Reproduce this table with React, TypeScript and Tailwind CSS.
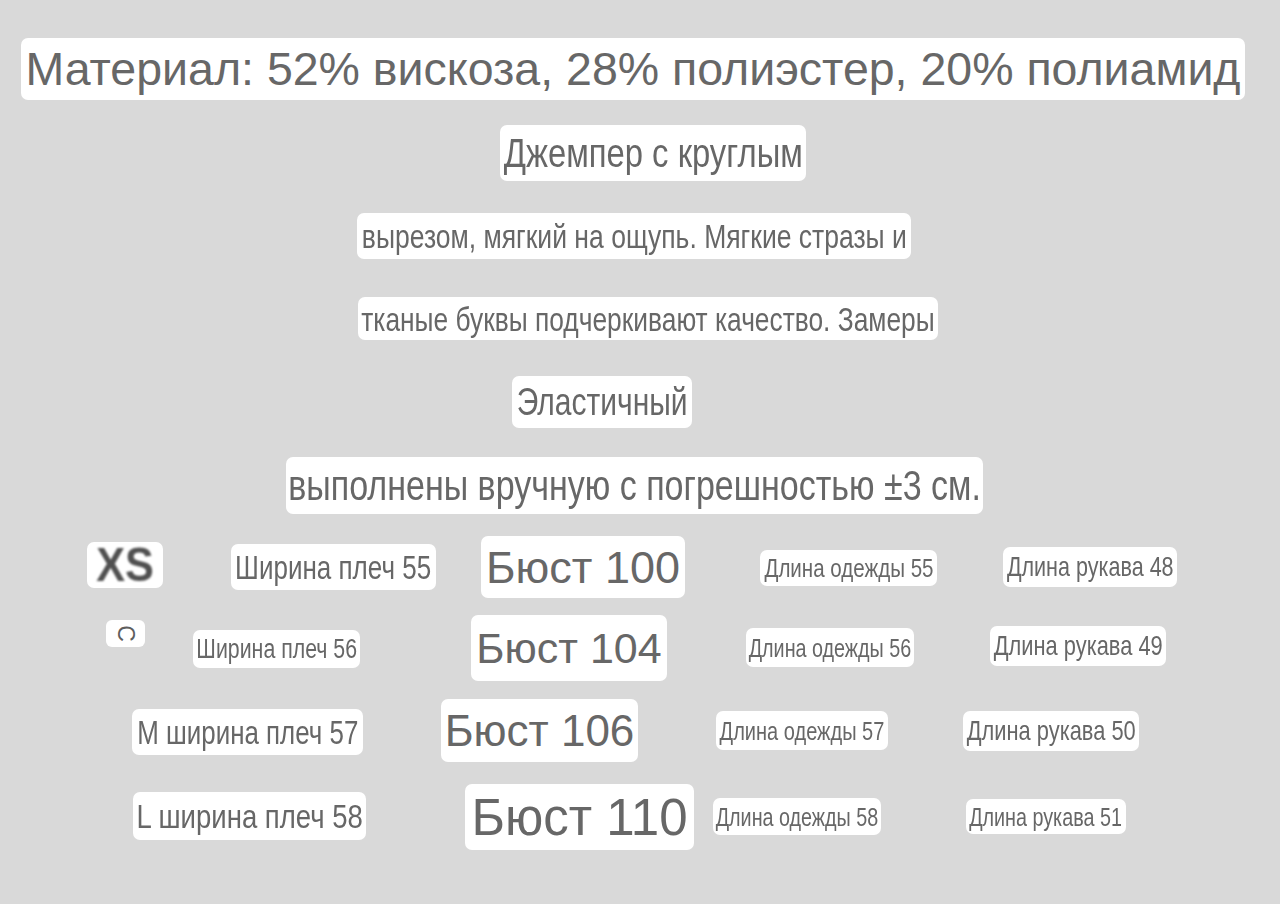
import React from "react";

type tagTypes = {
  text: string;
  className: string;
  textClass?: string;
};

const arial = "font-['Liberation_Sans',Arial,sans-serif]";

// narrow labels: Arial squeezed horizontally, like Arial Narrow in the photo
const Tag: React.FC<tagTypes> = ({ text, className, textClass = "" }) => (
  <div
    className={`flex shrink-0 items-center justify-center overflow-visible whitespace-nowrap rounded-[7px] bg-white text-[#676767] leading-none ${arial} ${className}`}
  >
    <span className={`inline-block origin-center ${textClass}`}>{text}</span>
  </div>
);

const App: React.FC = () => {
  return (
    <div className="flex h-[904px] w-[1280px] flex-col overflow-hidden bg-[#d9d9d9] pt-[38px]">
      <Tag
        text="Материал: 52% вискоза, 28% полиэстер, 20% полиамид"
        className="ml-[21px] h-[62px] w-[1224px] text-[46.5px]"
      />
      <Tag
        text="Джемпер с круглым"
        className="ml-[500px] mt-[25px] h-[56px] w-[306px] text-[40px]"
        textClass="scale-x-[0.82]"
      />
      <Tag
        text="вырезом, мягкий на ощупь. Мягкие стразы и"
        className="ml-[357px] mt-[32px] h-[46px] w-[554px] text-[34px]"
        textClass="scale-x-[0.78]"
      />
      <Tag
        text="тканые буквы подчеркивают качество. Замеры"
        className="ml-[358px] mt-[38px] h-[43px] w-[580px] text-[34px]"
        textClass="scale-x-[0.775]"
      />
      <Tag
        text="Эластичный"
        className="ml-[512px] mt-[36px] h-[52px] w-[180px] text-[38px]"
        textClass="scale-x-[0.79]"
      />
      <Tag
        text="выполнены вручную с погрешностью ±3 см."
        className="ml-[286px] mt-[29px] h-[57px] w-[697px] text-[42px]"
        textClass="scale-x-[0.81]"
      />

      {/* XS */}
      <div className="mt-[22px] flex items-start">
        <div
          className={`ml-[87px] mt-[6px] flex h-[46px] w-[76px] shrink-0 items-center justify-center rounded-[7px] bg-white text-[48px] font-bold leading-none text-[#505050] ${arial}`}
        >
          <span className="inline-block scale-x-[0.9] blur-[1.3px]">XS</span>
        </div>
        <Tag text="Ширина плеч 55" className="ml-[68px] mt-[8px] h-[46px] w-[205px] text-[34px]" textClass="scale-x-[0.765]" />
        <Tag text="Бюст 100" className="ml-[45px] h-[62px] w-[204px] text-[45px]" />
        <Tag text="Длина одежды 55" className="ml-[75px] mt-[14px] h-[36px] w-[177px] text-[26px]" textClass="scale-x-[0.79]" />
        <Tag text="Длина рукава 48" className="ml-[66px] mt-[11px] h-[40px] w-[174px] text-[28px]" textClass="scale-x-[0.77]" />
      </div>

      {/* S */}
      <div className="mt-[17px] flex items-start">
        <div className="ml-[106px] mt-[5px] flex h-[27px] w-[39px] shrink-0 items-center justify-center rounded-[6px] bg-white">
          <span className={`inline-block rotate-90 text-[23px] leading-none text-[#5e5e5e] ${arial}`}>С</span>
        </div>
        <Tag text="Ширина плеч 56" className="ml-[48px] mt-[15px] h-[38px] w-[167px] text-[27px]" textClass="scale-x-[0.79]" />
        <Tag text="Бюст 104" className="ml-[111px] h-[66px] w-[196px] text-[43px]" />
        <Tag text="Длина одежды 56" className="ml-[79px] mt-[13px] h-[39px] w-[168px] text-[26px]" textClass="scale-x-[0.76]" />
        <Tag text="Длина рукава 49" className="ml-[76px] mt-[11px] h-[40px] w-[176px] text-[28px]" textClass="scale-x-[0.78]" />
      </div>

      {/* M */}
      <div className="mt-[18px] flex items-start">
        <Tag text="М ширина плеч 57" className="ml-[132px] mt-[10px] h-[46px] w-[231px] text-[33px]" textClass="scale-x-[0.785]" />
        <Tag text="Бюст 106" className="ml-[78px] h-[63px] w-[197px] text-[44px]" />
        <Tag text="Длина одежды 57" className="ml-[78px] mt-[12px] h-[39px] w-[172px] text-[26px]" textClass="scale-x-[0.77]" />
        <Tag text="Длина рукава 50" className="ml-[75px] mt-[12px] h-[40px] w-[176px] text-[28px]" textClass="scale-x-[0.78]" />
      </div>

      {/* L */}
      <div className="mt-[22px] flex items-start">
        <Tag text="L ширина плеч 58" className="ml-[133px] mt-[8px] h-[48px] w-[233px] text-[34px]" textClass="scale-x-[0.81]" />
        <Tag text="Бюст 110" className="ml-[99px] h-[66px] w-[229px] text-[51px]" />
        <Tag text="Длина одежды 58" className="ml-[19px] mt-[14px] h-[37px] w-[168px] text-[26px]" textClass="scale-x-[0.76]" />
        <Tag text="Длина рукава 51" className="ml-[85px] mt-[15px] h-[35px] w-[160px] text-[26px]" textClass="scale-x-[0.76]" />
      </div>
    </div>
  );
};

export default App;
